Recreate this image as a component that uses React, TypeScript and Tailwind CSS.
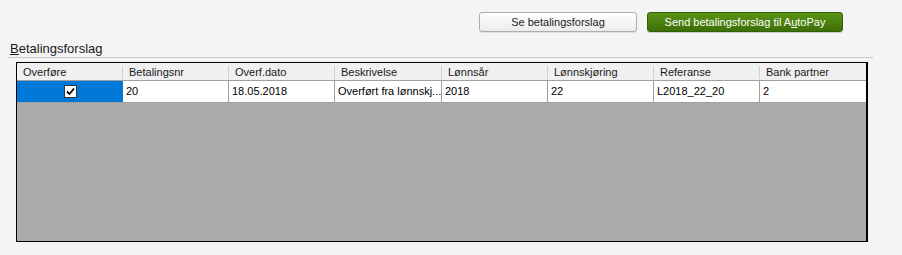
import React from "react";

const cols = [
  { name: "Overføre", w: "w-[106px]" },
  { name: "Betalingsnr", w: "w-[106px]" },
  { name: "Overf.dato", w: "w-[106px]" },
  { name: "Beskrivelse", w: "w-[107px]" },
  { name: "Lønnsår", w: "w-[106px]" },
  { name: "Lønnskjøring", w: "w-[106px]" },
  { name: "Referanse", w: "w-[106px]" },
  { name: "Bank partner", w: "w-[106px]" },
];

const row = ["", "20", "18.05.2018", "Overført fra lønnskj...", "2018", "22", "L2018_22_20", "2"];

export default function App() {
  return (
    <div
      className="w-[902px] h-[255px] bg-[#f4f4f4] text-black overflow-hidden"
      style={{ fontFamily: '"Liberation Sans", Arial, sans-serif' }}
    >
      <div className="flex justify-end gap-[10px] pt-[12px] pr-[59px]">
        <button className="w-[158px] h-[20px] rounded-[3px] border border-[#adadad] bg-gradient-to-b from-[#ffffff] to-[#ececec] text-[11px] leading-none text-[#1a1a1a] shadow-[0_1px_0_rgba(0,0,0,0.08)]">
          Se betalingsforslag
        </button>
        <button className="w-[196px] h-[20px] rounded-[3px] border border-[#335f06] bg-gradient-to-b from-[#5a9417] to-[#3d6f07] text-[11px] leading-none text-white shadow-[0_1px_0_rgba(0,0,0,0.15)]">
          Send betalingsforslag til A<span className="underline">u</span>toPay
        </button>
      </div>
      <div className="pl-[10px] pt-[9px] text-[13px] leading-[15px] text-[#1a1a1a]">
        <span className="underline">B</span>etalingsforslag
      </div>
      <div className="ml-[8px] mt-[1px] w-[865px] h-px bg-[#c8c8c8]" />
      <div className="ml-[16px] mt-[4px] w-[852px] h-[180px] border border-black border-r-2 bg-[#ababab] text-[11px]">
        <div className="flex h-[18px] bg-[#f0f0f0] border-b border-[#a0a0a0]">
          {cols.map((c, i) => (
            <div key={i} className={`${c.w} flex items-center justify-between shrink-0`}>
              <span className="pl-[6px] pt-[1px] text-[#1a1a1a]">{c.name}</span>
              {i < cols.length - 1 ? <span className="w-px h-[13px] bg-[#d0d0d0] mt-[1px]" /> : null}
            </div>
          ))}
        </div>
        <div className="flex h-[22px] border-b border-[#a0a0a0]">
          {cols.map((c, i) => (
            <div
              key={i}
              className={`${c.w} shrink-0 flex items-center ${
                i === 0 ? "bg-[#0078d7] justify-center border-r border-[#0078d7]" : "bg-white pl-[3px] border-r border-[#a0a0a0]"
              } ${i === cols.length - 1 ? "border-r-0" : ""}`}
            >
              {i === 0 ? (
                <span className="w-[13px] h-[13px] bg-white border border-[#333] flex items-center justify-center ml-[1px]">
                  <svg width="9" height="9" viewBox="0 0 9 9">
                    <path d="M1 4.5 L3.5 7 L8 1.5" fill="none" stroke="#000" strokeWidth="1.8" />
                  </svg>
                </span>
              ) : (
                <span className="text-black whitespace-nowrap">{row[i]}</span>
              )}
            </div>
          ))}
        </div>
      </div>
    </div>
  );
}
